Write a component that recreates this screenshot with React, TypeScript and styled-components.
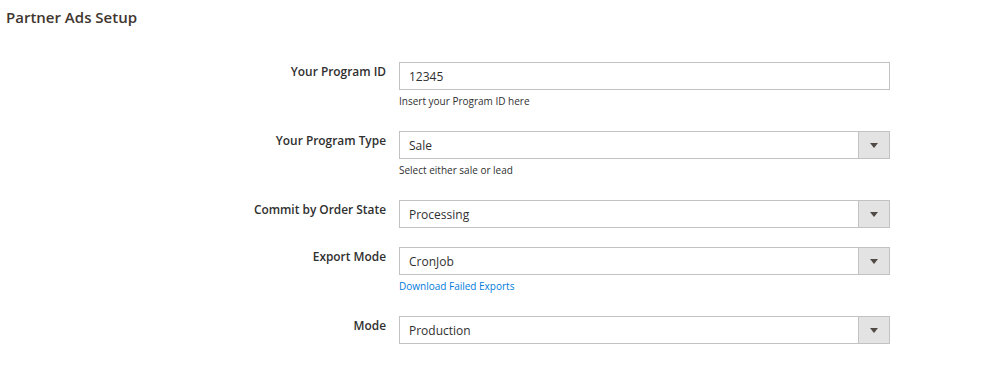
import React from "react";
import styled, { createGlobalStyle } from "styled-components";

const Global = createGlobalStyle`
  html, body { margin: 0; padding: 0; background: #ffffff; }
  body { font-family: "Open Sans", "Noto Sans", sans-serif; color: #303030; }
`;

const Page = styled.div`
  width: 982px;
  height: 382px;
  box-sizing: border-box;
  padding: 7px 0 0 6px;
`;

const Title = styled.h2`
  margin: 0;
  font-size: 15px;
  line-height: 20px;
  font-weight: 600;
  color: #41362f;
`;

const Form = styled.div`
  margin-top: 35px;
  display: flex;
  flex-direction: column;
  gap: 19px;
`;

const Row = styled.div`
  display: grid;
  grid-template-columns: 380px 491px;
  column-gap: 13px;
  align-items: start;
`;

const Label = styled.label`
  text-align: right;
  font-size: 11.9px;
  line-height: 16px;
  font-weight: 600;
  color: #303030;
  padding-top: 1px;
`;

const Control = styled.div`
  display: flex;
  flex-direction: column;
`;

const Field = styled.div`
  height: 28px;
  box-sizing: border-box;
  border: 1px solid #c2c2c2;
  background: #fff;
  display: flex;
  align-items: stretch;
`;

const Value = styled.span`
  flex: 1;
  display: flex;
  align-items: center;
  padding-left: 9px;
  font-size: 12px;
  color: #303030;
`;

const ArrowBox = styled.span`
  width: 30px;
  background: #e3e3e3;
  border-left: 1px solid #c2c2c2;
  display: flex;
  align-items: center;
  justify-content: center;
`;

const Arrow = styled.span`
  width: 0;
  height: 0;
  border-left: 4px solid transparent;
  border-right: 4px solid transparent;
  border-top: 5px solid #514943;
`;

const Note = styled.div<{ $link?: boolean }>`
  padding: 3px 0;
  font-size: 10px;
  line-height: 16px;
  color: ${(p) => (p.$link ? "#007bdb" : "#303030")};
`;

type RowDef = { label: string; value: string; select: boolean; note?: string; link?: boolean };

const rows: RowDef[] = [
  { label: "Your Program ID", value: "12345", select: false, note: "Insert your Program ID here" },
  { label: "Your Program Type", value: "Sale", select: true, note: "Select either sale or lead" },
  { label: "Commit by Order State", value: "Processing", select: true },
  { label: "Export Mode", value: "CronJob", select: true, note: "Download Failed Exports", link: true },
  { label: "Mode", value: "Production", select: true },
];

export default function App() {
  return (
    <Page>
      <Global />
      <Title>Partner Ads Setup</Title>
      <Form>
        {rows.map((r) => (
          <Row key={r.label}>
            <Label>{r.label}</Label>
            <Control>
              <Field>
                <Value>{r.value}</Value>
                {r.select && (
                  <ArrowBox>
                    <Arrow />
                  </ArrowBox>
                )}
              </Field>
              {r.note && <Note $link={r.link}>{r.note}</Note>}
            </Control>
          </Row>
        ))}
      </Form>
    </Page>
  );
}
